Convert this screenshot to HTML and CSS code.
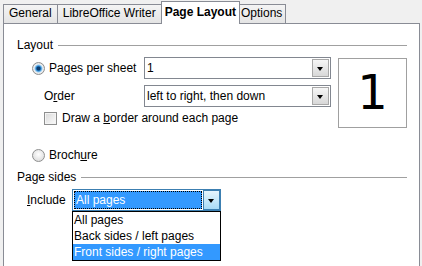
FILE: index.html
```html
<!DOCTYPE html>
<html lang="en">
<head>
  <meta charset="UTF-8"/>
  <title>Print Options - Page Layout</title>
  <link rel="stylesheet" href="styles.css">
</head>
<body>

  <!-- Tab strip -->
  <div class="tabs">
    <div class="tab">General</div>
    <div class="tab">LibreOffice Writer</div>
    <div class="tab tab-active">Page Layout</div>
    <div class="tab">Options</div>
  </div>

  <!-- Page Layout panel -->
  <div class="panel">
    <div class="section-head"><span>Layout</span></div>

    <div class="layout">
      <div class="fields">
        <div class="row">
          <label class="opt"><span class="radio radio-on"></span><span>Pa<u>g</u>es per sheet</span></label>
          <div class="combo"><span class="combo-value">1</span><span class="combo-btn"></span></div>
        </div>
        <div class="row">
          <label class="opt opt-sub"><span>O<u>r</u>der</span></label>
          <div class="combo"><span class="combo-value">left to right, then down</span><span class="combo-btn"></span></div>
        </div>
        <div class="row-check">
          <span class="check"></span><span>Draw a <u>b</u>order around each page</span>
        </div>
      </div>
      <div class="preview">1</div>
    </div>

    <div class="row-brochure">
      <label class="opt"><span class="radio"></span><span>Broch<u>u</u>re</span></label>
    </div>

    <div class="section-head section-sides"><span>Page sides</span></div>

    <div class="row-include">
      <label class="include-label"><u>I</u>nclude</label>
      <div class="combo combo-focus">
        <span class="combo-value"><span class="focus-rect">All pages</span></span>
        <span class="combo-btn"></span>
        <ul class="dropdown">
          <li>All pages</li>
          <li>Back sides / left pages</li>
          <li class="selected">Front sides / right pages</li>
        </ul>
      </div>
    </div>
  </div>

</body>
</html>
```

FILE: styles.css
```css
* {
  box-sizing: border-box;
  margin: 0; padding: 0;
}

body {
  background: #f0f0f0;
  font-family: "Liberation Sans", Arial, sans-serif;
  font-size: 12px;
  color: #000;
  height: 266px;
  overflow: hidden;
}

u {
  text-decoration: underline;
  text-underline-offset: 1px;
}

/* Tabs */

.tabs {
  display: flex;
  align-items: flex-end;
  height: 24px;
  padding-left: 3px;
  position: relative;
  z-index: 2;
}

.tab {
  height: 19px;
  line-height: 17px;
  padding: 0 5px;
  border: 1px solid #898c95;
  border-bottom: none;
  background: linear-gradient(#f4f4f4, #e4e4e4);
  margin-bottom: 1px;
}

.tab + .tab {
  margin-left: -1px;
}

.tab-active {
  height: 23px;
  line-height: 21px;
  font-weight: bold;
  background: #fff;
  margin: 0 -2px 0 0;
  padding: 0 3px;
  position: relative;
  z-index: 1;
}

.tab-active + .tab {
  padding: 0 3px;
}

/* Panel */

.panel {
  margin: -1px 2px 0 3px;
  background: #fff;
  border: 1px solid #898c95;
  height: 250px;
  padding: 14px 12px 0 13px;
}

.section-head {
  display: flex;
  align-items: center;
  height: 14px;
  line-height: 14px;
}

.section-head::after {
  content: "";
  flex: 1;
  height: 1px;
  background: #a0a0a0;
  margin-left: 5px;
}

.layout {
  display: flex;
  margin-top: 5px;
}

.fields {
  width: 314px;
}

.row {
  display: flex;
  align-items: center;
  height: 22px;
  margin-bottom: 6px;
}

.opt {
  display: flex;
  align-items: center;
  width: 127px;
  padding-left: 15px;
}

.opt-sub {
  padding-left: 27px;
}

.radio {
  width: 13px;
  height: 13px;
  border-radius: 50%;
  border: 1px solid #8e8f8f;
  background: radial-gradient(circle at 50% 40%, #ffffff, #d4d4d4);
  margin-right: 4px;
}

.radio-on {
  background: radial-gradient(circle, #0b3c6e 0 1.5px, #2b8ad6 2.5px, #9ccdf0 3.6px, #f2f2f2 4.5px, #dadada 6px);
}

.combo {
  display: flex;
  width: 187px;
  height: 22px;
  border: 1px solid #828790;
  background: #fff;
  position: relative;
}

.combo-value {
  flex: 1;
  line-height: 20px;
  padding-left: 2px;
  white-space: nowrap;
}

.combo-btn {
  width: 17px;
  margin: 1px;
  border: 1px solid #a8a8a8;
  background: linear-gradient(#f6f6f6, #d8d8d8);
  position: relative;
}

.combo-btn::after {
  content: "";
  position: absolute;
  left: 4px;
  top: 7px;
  border-left: 3.5px solid transparent;
  border-right: 3.5px solid transparent;
  border-top: 4px solid #000;
}

.row-check {
  display: flex;
  align-items: center;
  height: 16px;
  margin-top: -3px;
  padding-left: 27px;
}

.check {
  width: 13px;
  height: 13px;
  border: 1px solid #8e8f8f;
  background: linear-gradient(135deg, #d9d9d9, #fbfbfb);
  box-shadow: inset 0 0 0 1px #f4f4f4;
  margin-right: 5px;
}

.preview {
  width: 69px;
  height: 70px;
  margin: 1px 0 0 7px;
  border: 1px solid #a0a0a0;
  background: #fff;
  font-family: "DejaVu Sans", sans-serif;
  font-size: 48px;
  line-height: 66px;
  text-align: center;
}

.row-brochure {
  margin-top: 19px;
  height: 16px;
  display: flex;
  align-items: center;
}

.section-sides {
  margin-top: 7px;
}

.row-include {
  display: flex;
  align-items: center;
  margin-top: 5px;
}

.include-label {
  width: 55px;
  padding-left: 10px;
}

.combo-focus {
  width: 149px;
  border-color: #3c7fb1;
}

.combo-focus .combo-value {
  padding: 1px;
}

.focus-rect {
  display: block;
  height: 18px;
  line-height: 16px;
  background: #3399ff;
  color: #fff;
  padding-left: 1px;
  border: 1px dotted #000;
}

.combo-focus .combo-btn {
  border-color: #3c7fb1;
  background: linear-gradient(#e6f5fd, #a9dbf6);
  margin: 0;
}

.combo-focus .combo-btn::after {
  left: 4px;
  top: 8px;
}

.dropdown {
  list-style: none;
  position: absolute;
  top: 21px;
  left: -1px;
  width: 149px;
  border: 1px solid #000;
  background: #fff;
  z-index: 5;
}

.dropdown li {
  height: 16px;
  line-height: 16px;
  padding-left: 1px;
  white-space: nowrap;
}

.dropdown .selected {
  background: #3399ff;
  color: #fff;
}
```
